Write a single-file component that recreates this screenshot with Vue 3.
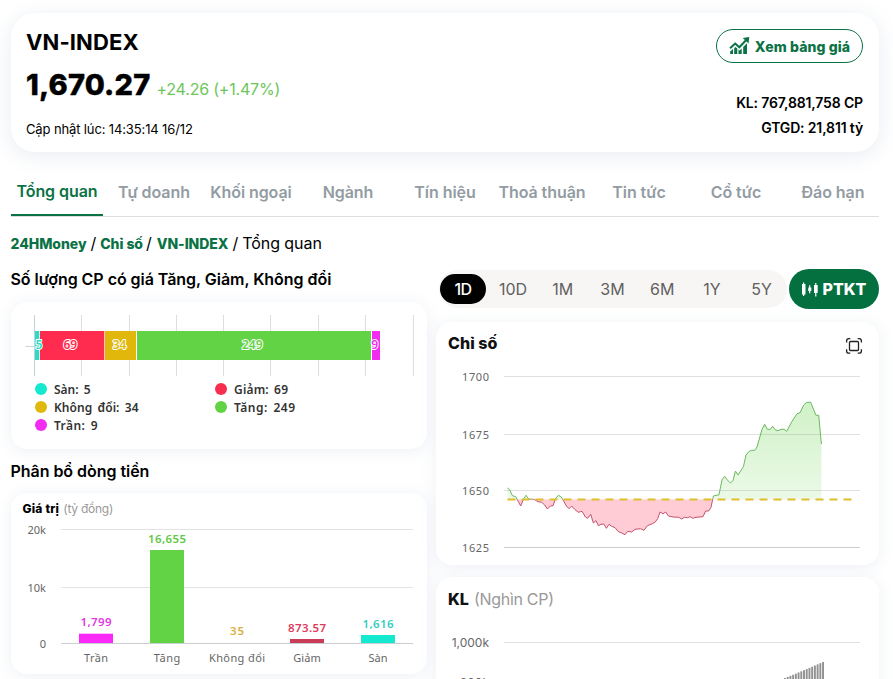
<script setup>
import { ref } from 'vue'

const tabs = ['Tổng quan', 'Tự doanh', 'Khối ngoại', 'Ngành', 'Tín hiệu', 'Thoả thuận', 'Tin tức', 'Cổ tức', 'Đáo hạn']
const activeTab = ref('Tổng quan')
const ranges = ['1D', '10D', '1M', '3M', '6M', '1Y', '5Y']
const activeRange = ref('1D')

// Stacked bar: number of tickers per state
const segments = [
  { value: 5, color: '#2fd9c4', x: 24, w: 4.3, label: 28 },
  { value: 69, color: '#ff2c50', x: 29, w: 64.3, label: 59.3 },
  { value: 34, color: '#e0b70a', x: 94, w: 31, label: 108.5 },
  { value: 249, color: '#62d344', x: 126, w: 234, label: 241.3 },
  { value: 9, color: '#f22cf0', x: 361, w: 8, label: 363.6 },
]
const splitGrid = [23.5, 70.5, 118.5, 165.5, 212.5, 259.5, 307.5, 354.5, 402.5]
const legend = [
  { text: 'Sàn: 5', color: '#14e8cf', x: 30, y: 87, w: 36.5 },
  { text: 'Giảm: 69', color: '#f82e50', x: 210, y: 87, w: 54 },
  { text: 'Không đổi: 34', color: '#dfb80b', x: 30, y: 105, w: 84.5 },
  { text: 'Tăng: 249', color: '#62d344', x: 210, y: 105, w: 61 },
  { text: 'Trần: 9', color: '#f22cf0', x: 30, y: 123, w: 43.5 },
]

// Money flow columns
const columns = [
  { name: 'Trần', value: '1,799', x: 85, top: 140.7, color: '#fb28fa', text: '#e03adf', nw: 24, vw: 31 },
  { name: 'Tăng', value: '16,655', x: 156, top: 57, color: '#62d344', text: '#62c848', nw: 26.5, vw: 38 },
  { name: 'Không đổi', value: '35', x: 226, top: 149.6, color: '#dfb80b', text: '#d8b13c', nw: 56, vw: 14 },
  { name: 'Giảm', value: '873.57', x: 296, top: 146, color: '#cb3c58', text: '#dc3c5a', nw: 27.5, vw: 38 },
  { name: 'Sàn', value: '1,616', x: 367, top: 142, color: '#14e8cf', text: '#35cdbd', nw: 19, vw: 31 },
]
const flowTicks = [
  { label: '20k', y: 36.5 },
  { label: '10k', y: 94.5 },
  { label: '0', y: 150.5 },
]

const indexTicks = [
  { label: '1700', y: 54.5 },
  { label: '1675', y: 112.5 },
  { label: '1650', y: 168.5 },
  { label: '1625', y: 225.5 },
]

// Intraday line, drawn on a canvas three times as dense as the chart
const points = [
  [233, 519], [240, 524], [248, 542], [258, 545], [266, 560], [273, 573], [281, 553], [289, 541], [297, 552],
  [313, 553], [325, 560], [336, 562], [345, 570], [353, 582], [362, 573], [370, 572], [378, 550], [386, 541],
  [394, 545], [402, 558], [410, 573], [418, 581], [426, 573], [436, 584], [446, 592], [457, 589], [467, 606],
  [474, 610], [483, 598], [491, 624], [499, 617], [506, 632], [514, 628], [522, 627], [530, 640], [538, 628],
  [546, 634], [556, 638], [566, 650], [576, 654], [586, 659], [594, 649], [606, 651], [616, 643], [632, 641],
  [643, 646], [653, 632], [668, 626], [676, 622], [684, 611], [691, 591], [700, 596], [708, 591], [716, 603],
  [730, 606], [747, 607], [756, 612], [764, 607], [774, 608], [781, 605], [789, 610], [799, 607], [820, 605],
  [828, 588], [837, 588], [844, 577], [851, 543], [868, 539], [877, 495], [885, 484], [893, 495], [902, 504],
  [910, 497], [917, 468], [925, 480], [941, 455], [949, 420], [957, 410], [965, 406], [975, 406], [982, 396],
  [997, 343], [1005, 328], [1013, 343], [1022, 343], [1029, 334], [1037, 345], [1045, 347], [1054, 343],
  [1063, 343], [1071, 349], [1087, 319], [1102, 296], [1111, 293], [1122, 270], [1131, 262], [1143, 262],
  [1151, 282], [1159, 301], [1167, 301], [1175, 387],
]
const toXY = ([x, y]) => `${(x / 3 - 6.3).toFixed(1)} ${(y / 3 - 7).toFixed(1)}`
const linePath = 'M' + points.map(toXY).join('L')
const areaPath = linePath + 'V177.3H71.4Z'

const volumes = Array.from({ length: 16 }, (_, i) => ({
  x: 345.3 + i * 2.72,
  y: 102 - Math.pow(i / 15, 1.05) * 17,
}))
</script>

<template>
  <div class="page">
    <header class="card summary">
      <div>
        <h1>VN-INDEX</h1>
        <div class="price">
          <strong>1,670.27</strong>
          <span>+24.26 (+1.47%)</span>
        </div>
        <p class="updated">Cập nhật lúc: 14:35:14 16/12</p>
      </div>
      <div class="side">
        <button class="board">
          <svg width="21" height="18" viewBox="0 0 21 18">
            <path d="M1 11.2 6.2 6.6l4.1 3.7L17 3.2" fill="none" stroke="currentColor" stroke-width="2" />
            <path d="M13.8 1 20.3 0l-.8 6.6z" fill="currentColor" />
            <path d="M1.2 14.6l2.8-2.6V17H1.2zM5.2 11.2l1.3-1.1 1.8 1.5V17H5.2zM9.5 12.6l1.2 1 2-2V17H9.5zM14.2 10l3.8-3.8V17h-3.8z" fill="currentColor" />
          </svg>
          <span>Xem bảng giá</span>
        </button>
        <p class="kl">KL: 767,881,758 CP</p>
        <p class="gtgd">GTGD: 21,811 tỷ</p>
      </div>
    </header>

    <nav class="tabs">
      <a v-for="t in tabs" :key="t" :class="{ active: t === activeTab }" @click="activeTab = t">{{ t }}</a>
    </nav>

    <div class="breadcrumb">
      <b>24HMoney</b><i>/</i><b>Chỉ số</b><i class="tight">/</i><b>VN-INDEX</b><i>/</i><span>Tổng quan</span>
    </div>

    <div class="content">
      <section class="left">
        <h2>Số lượng CP có giá Tăng, Giảm, Không đổi</h2>
        <div class="card split">
          <svg width="416" height="147" viewBox="0 0 416 147">
            <line v-for="(x, i) in splitGrid" :key="x" :x1="x" :x2="x" y1="13" y2="74" :stroke="i ? '#dedede' : '#c3d2d6'" />
            <line x1="14.5" x2="24" y1="44.5" y2="44.5" stroke="#ccd3d8" />
            <rect v-for="s in segments" :key="s.value" :x="s.x" y="29" :width="s.w" height="29" :fill="s.color" />
            <text v-for="s in segments" :key="'t' + s.value" class="seg" :x="s.label" y="47" :fill="s.color">{{ s.value }}</text>
            <g v-for="l in legend" :key="l.text">
              <circle :cx="l.x" :cy="l.y" r="6" :fill="l.color" />
              <text class="legend" :x="l.x + 13" :y="l.y + 5" :textLength="l.w">{{ l.text }}</text>
            </g>
          </svg>
        </div>

        <h2 class="second">Phân bổ dòng tiền</h2>
        <div class="card flow">
          <svg width="416" height="181" viewBox="0 0 416 181">
            <text class="flow-title" x="11.5" y="20.3" textLength="36.5">Giá trị</text>
            <text class="flow-unit" x="52.3" y="20.3" textLength="50">(tỷ đồng)</text>
            <g v-for="t in flowTicks" :key="t.label">
              <line x1="50" x2="402" :y1="t.y" :y2="t.y" :stroke="t.y > 150 ? '#c8ced2' : '#e2e2e2'" />
              <text class="axis" x="35" :y="t.y + 4" text-anchor="end">{{ t.label }}</text>
            </g>
            <g v-for="c in columns" :key="c.name" text-anchor="middle">
              <rect :x="c.x - 17" :y="c.top" width="34" :height="150 - c.top" :fill="c.color" v-if="c.value !== '35'" />
              <text class="value" :x="c.x" :y="Math.min(c.top - 7.5, 143.6)" :fill="c.text" :textLength="c.vw">{{ c.value }}</text>
              <text class="axis" :x="c.x" y="169" :textLength="c.nw">{{ c.name }}</text>
            </g>
          </svg>
        </div>
      </section>

      <section class="right">
        <div class="toolbar">
          <div class="ranges">
            <button v-for="r in ranges" :key="r" :class="{ active: r === activeRange }" @click="activeRange = r">{{ r }}</button>
          </div>
          <button class="ptkt">
            <svg width="17" height="15" viewBox="0 0 17 15" fill="currentColor">
              <path d="M0 2h1V.5h1.2V2h1.3v10.5H2.2V14H1v-1.5H0zM6.2 5.5h.9V3.2h1.2v2.3h1v3.6h-1v2.2H7.1V9.1h-.9zM12 3h1.2V1h1.2v2h1.3v8h-1.3v3.5h-1.2V11H12z" />
            </svg>
            <span>PTKT</span>
          </button>
        </div>

        <div class="card index">
          <svg width="443" height="243" viewBox="0 0 443 243">
            <defs>
              <linearGradient id="up" x1="0" y1="0" x2="0" y2="1">
                <stop offset="0" stop-color="#62d344" stop-opacity=".3" />
                <stop offset="1" stop-color="#62d344" stop-opacity=".06" />
              </linearGradient>
              <clipPath id="above"><rect x="60" y="40" width="370" height="137.3" /></clipPath>
              <clipPath id="below"><rect x="60" y="177.3" width="370" height="60" /></clipPath>
            </defs>
            <text class="card-title" x="12" y="27" textLength="49.5">Chỉ số</text>
            <g class="expand">
              <rect x="413.5" y="19.5" width="9" height="9" rx="1" />
              <path d="M410.6 20.5v-1.6q0-2.3 2.3-2.3h1.4M421.7 16.6h1.4q2.3 0 2.3 2.3v1.6M425.4 27.3v1.6q0 2.3-2.3 2.3h-1.4M414.3 31.2h-1.4q-2.3 0-2.3-2.3v-1.6" />
            </g>
            <g v-for="t in indexTicks" :key="t.label">
              <line x1="68" x2="424" :y1="t.y" :y2="t.y" :stroke="t.y > 200 ? '#c8ced2' : '#e0e0e2'" />
              <text class="axis" x="53" :y="t.y + 4.3" text-anchor="end" textLength="27">{{ t.label }}</text>
            </g>
            <g clip-path="url(#above)">
              <path :d="areaPath" fill="url(#up)" />
              <path :d="linePath" fill="none" stroke="#6bb860" />
            </g>
            <g clip-path="url(#below)">
              <path :d="areaPath" fill="#ffccd6" />
              <path :d="linePath" fill="none" stroke="#c2536c" />
            </g>
            <line x1="71.5" x2="416" y1="177.5" y2="177.5" stroke="#dfbe2c" stroke-width="2" stroke-dasharray="8 6" />
          </svg>
        </div>

        <div class="card volume">
          <svg width="443" height="243" viewBox="0 0 443 243">
            <text class="card-title" x="12" y="28">KL</text>
            <text class="card-unit" x="38" y="28" textLength="80">(Nghìn CP)</text>
            <line x1="68" x2="424" y1="65.5" y2="65.5" stroke="#e0e0e2" />
            <text class="axis inter" x="53" y="70" text-anchor="end">1,000k</text>
            <text class="axis inter" x="53" y="109.5" text-anchor="end">800k</text>
            <rect v-for="v in volumes" :key="v.x" :x="v.x" :y="v.y" width="1.9" :height="200 - v.y" fill="#919191" />
          </svg>
        </div>
      </section>
    </div>
  </div>
</template>

<style>
html,
body {
  margin: 0;
  height: 100%;
  overflow: hidden;
  background: #fff;
}
</style>

<style scoped>
.page {
  box-sizing: border-box;
  width: 893px;
  height: 679px;
  padding: 13px 14px 0 11px;
  overflow: hidden;
  font-family: Inter, "Liberation Sans", sans-serif;
  color: #000;
}
h1, h2, p {
  margin: 0;
}
button {
  font: inherit;
  border: 0;
  padding: 0;
  cursor: pointer;
}
svg {
  display: block;
}
.card {
  background: #fff;
  border-radius: 16px;
  box-shadow: 0 2px 16px rgba(90, 120, 160, 0.11);
}
.summary {
  box-sizing: border-box;
  height: 139px;
  padding: 16px 16px 0 15px;
  border-radius: 24px;
  display: flex;
  justify-content: space-between;
  box-shadow: 0 4px 20px rgba(90, 120, 160, 0.14);
}
h1 {
  font-size: 22px;
  line-height: 26px;
  font-weight: 700;
  letter-spacing: 0.1px;
}
.price {
  display: flex;
  align-items: baseline;
  gap: 6px;
  margin-top: 12px;
  line-height: 36px;
}
.price strong {
  font-size: 29px;
  font-weight: 800;
  letter-spacing: 0.2px;
  -webkit-text-stroke: 0.4px #000;
}
.price span {
  font-size: 16px;
  letter-spacing: -0.2px;
  color: #6cc65b;
}
.updated {
  margin-top: 13px;
  font-size: 13px;
  line-height: 18px;
  letter-spacing: -0.13px;
}
.side {
  display: flex;
  flex-direction: column;
  align-items: flex-end;
  font-size: 14px;
  font-weight: 600;
  line-height: 20px;
  letter-spacing: -0.15px;
}
.board {
  box-sizing: border-box;
  width: 147px;
  height: 34px;
  border: 1px solid #0b7245;
  border-radius: 17px;
  background: #fff;
  color: #0b7245;
  display: flex;
  align-items: center;
  justify-content: center;
  gap: 5px;
  font-size: 14px;
  font-weight: 800;
  letter-spacing: 0.1px;
  white-space: nowrap;
}
.board span {
  padding-top: 2px;
}
.kl {
  margin-top: 30px;
}
.gtgd {
  margin-top: 5px;
}
.tabs {
  display: grid;
  grid-template-columns: repeat(9, 92px);
  gap: 5px;
  margin-top: 16px;
  height: 48px;
  border-bottom: 1px solid #dcdfe1;
}
.tabs a {
  box-sizing: border-box;
  height: 48px;
  text-align: center;
  font-size: 16px;
  font-weight: 600;
  line-height: 48px;
  letter-spacing: -0.07px;
  color: #939ca3;
  white-space: nowrap;
  cursor: pointer;
}
.tabs a.active {
  color: #0b7245;
  border-bottom: 2px solid #0b7245;
  line-height: 46px;
}
.breadcrumb {
  display: flex;
  align-items: center;
  height: 20px;
  margin: 16px 0 0 -0.5px;
  font-size: 16px;
  letter-spacing: -0.05px;
}
.breadcrumb b {
  font-size: 14px;
  font-weight: 800;
  padding-top: 1px;
  color: #0b7245;
}
.breadcrumb i {
  font-style: normal;
  margin: 0 4px;
}
.breadcrumb i.tight {
  margin: 0 5px 0 3px;
}
.content {
  display: grid;
  grid-template-columns: 416px 443px;
  gap: 9px;
  margin-top: 16px;
}
h2 {
  height: 22px;
  line-height: 21px;
  margin: 0 0 11px -0.5px;
  font-size: 16px;
  font-weight: 600;
  letter-spacing: -0.04px;
  white-space: nowrap;
}
h2.second {
  margin-top: 11px;
  line-height: 22px;
}
.toolbar {
  display: flex;
  justify-content: space-between;
  align-items: center;
  height: 40px;
  padding-left: 3px;
}
.ranges {
  display: grid;
  grid-template-columns: repeat(7, 1fr);
  align-items: center;
  width: 348px;
  height: 38px;
  border-radius: 19px;
  background: #f8f6f5;
}
.ranges button {
  height: 30px;
  border-radius: 15px;
  background: none;
  font-size: 16px;
  color: #606060;
  margin-left: -1px;
}
.ranges button.active {
  width: 46px;
  margin-left: 1px;
  background: #000;
  color: #fff;
  font-weight: 500;
  letter-spacing: -0.5px;
}
.ptkt {
  width: 90px;
  height: 40px;
  border-radius: 20px;
  background: #04703f;
  color: #fff;
  display: flex;
  align-items: center;
  justify-content: center;
  gap: 4px;
  font-size: 16px;
  font-weight: 800;
}
.index {
  margin-top: 13px;
}
.volume {
  margin-top: 12px;
}
.seg {
  font: 600 12px "Noto Sans", sans-serif;
  text-anchor: middle;
  stroke: #fff;
  stroke-width: 2px;
  stroke-linejoin: round;
  paint-order: stroke;
}
.legend {
  font: 600 12px "Noto Sans", sans-serif;
  word-spacing: 2px;
  fill: #333;
}
.axis {
  font: 11px "Noto Sans", sans-serif;
  fill: #666;
}
.axis.inter {
  font: 12px Inter, sans-serif;
}
.value {
  font: 600 11.5px "Noto Sans", sans-serif;
}
.flow-title {
  font-size: 12px;
  font-weight: 800;
}
.flow-unit {
  font-size: 12px;
  fill: #999;
}
.card-title {
  font-size: 16px;
  font-weight: 800;
  fill: #111;
}
.card-unit {
  font-size: 16px;
  fill: #999;
}
.expand {
  fill: none;
  stroke: #222;
  stroke-width: 1.3;
}
</style>
